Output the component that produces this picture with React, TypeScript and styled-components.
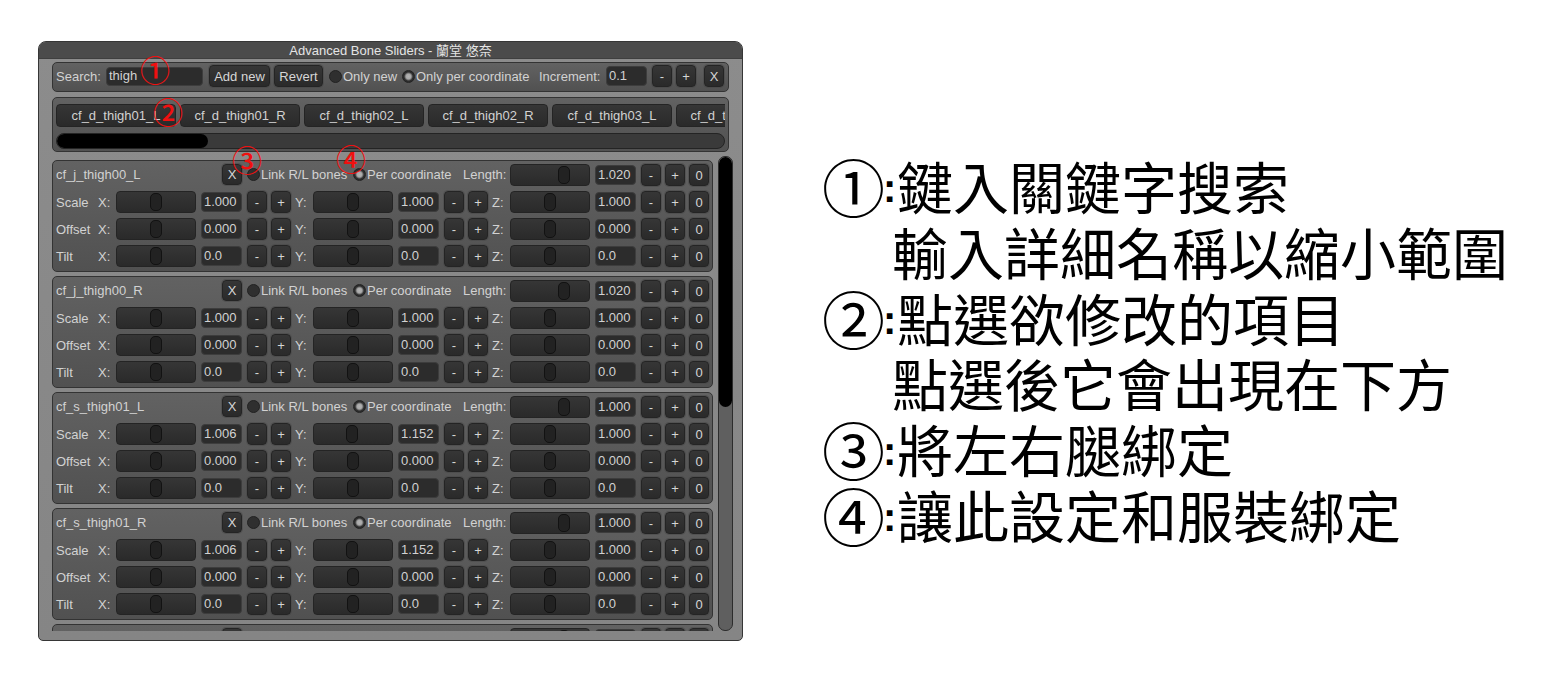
import React from "react";
import styled, { createGlobalStyle } from "styled-components";

const Global = createGlobalStyle`
  html, body { margin: 0; padding: 0; background: #fff; }
  #root { width: 1558px; height: 681px; overflow: hidden; }
`;

const UI_FONT = `"Liberation Sans", "Noto Sans CJK TC", sans-serif`;

const Page = styled.div`
  display: flex;
  align-items: flex-start;
  padding: 41px 0 0 38px;
  font-family: ${UI_FONT};
  font-size: 13px;
  color: #d2d2d2;
`;

const Window = styled.div`
  position: relative;
  box-sizing: border-box;
  width: 705px;
  height: 600px;
  flex: none;
  background: linear-gradient(#8c8c8c, #858585);
  border: 1px solid #363636;
  border-radius: 8px 8px 5px 5px;
  overflow: hidden;
`;

const TitleBar = styled.div`
  height: 16px;
  line-height: 17px;
  background: #4b4b4b;
  border-bottom: 1px solid #3f3f3f;
  text-align: center;
  color: #e4e4e4;
`;

const Content = styled.div`
  display: flex;
  flex-direction: column;
  gap: 5px;
  padding: 3px 8px 0 13px;
`;

const Card = styled.div`
  box-sizing: border-box;
  border: 1px solid #333;
  border-radius: 5px;
  background: linear-gradient(#626262, #515151);
`;

const Toolbar = styled(Card)`
  width: 677px;
  height: 30px;
  display: flex;
  align-items: center;
  padding: 0 0 2px 3px;
  white-space: nowrap;
`;

const Dark = styled.div`
  box-sizing: border-box;
  background: linear-gradient(#363636, #2a2a2a);
  border: 1px solid #242424;
  border-radius: 4px;
`;

const TextValue = styled(Dark)<{ $w: number; $ml?: number; $h?: number }>`
  width: ${(p) => p.$w}px;
  height: ${(p) => p.$h ?? 20}px;
  margin-left: ${(p) => p.$ml ?? 5}px;
  flex: none;
  padding-left: 2px;
  line-height: ${(p) => (p.$h ?? 20) - 3}px;
  background: #2c2c2c;
  border-color: #3d3d3d;
  color: #d2d2d2;
`;

const Btn = styled(Dark)<{ $w?: number; $ml?: number; $h?: number }>`
  width: ${(p) => p.$w ?? 20}px;
  height: ${(p) => p.$h ?? 22}px;
  margin-left: ${(p) => p.$ml ?? 4}px;
  flex: none;
  display: flex;
  align-items: center;
  justify-content: center;
  color: #d6d6d6;
  box-shadow: 0 0 0 1px rgba(70, 70, 70, 0.5);
`;

const Caption = styled.span<{ $w?: number }>`
  flex: none;
  display: inline-block;
  width: ${(p) => (p.$w ? `${p.$w}px` : "auto")};
`;

const RadioDot = styled.span<{ $on?: boolean }>`
  flex: none;
  box-sizing: border-box;
  width: 13px;
  height: 13px;
  margin-right: 1px;
  border-radius: 50%;
  border: 1px solid #222;
  background: ${(p) =>
    p.$on
      ? "radial-gradient(circle, #b4b4b4 0, #a8a8a8 2.5px, #2d2d2d 4.5px)"
      : "#2f2f2f"};
`;

const RadioOption = styled.div<{ $w?: number; $ml?: number }>`
  flex: none;
  display: flex;
  align-items: center;
  width: ${(p) => (p.$w ? `${p.$w}px` : "auto")};
  margin-left: ${(p) => p.$ml ?? 0}px;
`;

const TabPanel = styled(Card)`
  width: 677px;
  height: 55px;
  padding: 6px 3px 0;
`;

const TabStrip = styled.div`
  display: flex;
  gap: 4px;
  width: 669px;
  overflow: hidden;
`;

const Tab = styled(Dark)`
  flex: none;
  width: 120px;
  height: 23px;
  line-height: 21px;
  text-align: center;
`;

const HTrack = styled.div`
  box-sizing: border-box;
  width: 669px;
  height: 16px;
  margin-top: 6px;
  border: 1px solid #242424;
  border-radius: 8px;
  background: #3a3a3a;
  overflow: hidden;
`;

const HThumb = styled.div`
  width: 151px;
  height: 100%;
  border-radius: 7px;
  background: #000;
`;

const ScrollArea = styled.div`
  display: flex;
  gap: 5px;
  height: 475px;
  margin-top: -1px;
`;

const Stack = styled.div`
  width: 661px;
  display: flex;
  flex-direction: column;
  gap: 4px;
  padding-top: 4px;
  overflow: hidden;
`;

const BonePanel = styled(Card)`
  flex: none;
  height: 112px;
  padding: 3px;
  display: flex;
  flex-direction: column;
  gap: 5px;
`;

const Row = styled.div`
  height: 22px;
  display: flex;
  align-items: center;
  white-space: nowrap;
`;

const HeaderRow = styled(Row)`
  & > ${Caption}, & > ${RadioOption} {
    padding-bottom: 2px;
  }
  & > ${Btn}:first-of-type {
    height: 21px;
    align-self: flex-start;
  }
`;

const SliderTrack = styled(Dark)`
  flex: none;
  display: flex;
  align-items: center;
  width: 80px;
  height: 22px;
`;

const SliderThumb = styled.div<{ $at: number }>`
  width: 12px;
  height: 18px;
  margin-left: ${(p) => p.$at}px;
  border-radius: 5px;
  background: #222;
  border: 1px solid #121212;
  box-sizing: border-box;
`;

const VTrack = styled.div`
  flex: none;
  box-sizing: border-box;
  width: 15px;
  height: 475px;
  border: 1px solid #2c2c2c;
  border-radius: 7px;
  background: #5f5f5f;
  overflow: hidden;
`;

const VThumb = styled.div`
  height: 250px;
  border-radius: 7px;
  background: #000;
`;

const Mark = styled.span<{ $x: number; $y: number }>`
  position: absolute;
  left: ${(p) => p.$x}px;
  top: ${(p) => p.$y}px;
  color: #f01010;
  font-family: "Noto Sans CJK TC", sans-serif;
  font-size: 30px;
  font-weight: 500;
  line-height: 30px;
`;

const Notes = styled.div`
  margin: 111px 0 0 79px;
  display: flex;
  flex-direction: column;
  font-family: "Noto Sans CJK TC", sans-serif;
  font-size: 56px;
  color: #000;
  white-space: nowrap;
`;

const NoteLine = styled.div<{ $indent?: boolean }>`
  display: flex;
  align-items: center;
  height: 65.8px;
  line-height: 65.8px;
  padding-left: ${(p) => (p.$indent ? 70 : 0)}px;
`;

const NoteTag = styled.span`
  flex: none;
  display: flex;
  align-items: center;
  width: 75px;
  height: 65.8px;
`;

const NoteCircle = styled.span`
  font-size: 63px;
`;

const Colon = styled.span`
  font-family: "Liberation Sans", sans-serif;
  font-weight: 700;
  font-size: 40px;
  margin-left: -2px;
  padding-top: 8px;
`;

type Axis = { value: string; at: number };
type Bone = { name: string; length: string; lengthAt: number; scale: [Axis, Axis, Axis] };

const dflt = (v: string): Axis => ({ value: v, at: 33 });
const triple = (v: string): [Axis, Axis, Axis] => [dflt(v), dflt(v), dflt(v)];

const bones: Bone[] = [
  { name: "cf_j_thigh00_L", length: "1.020", lengthAt: 47, scale: triple("1.000") },
  { name: "cf_j_thigh00_R", length: "1.020", lengthAt: 47, scale: triple("1.000") },
  {
    name: "cf_s_thigh01_L",
    length: "1.000",
    lengthAt: 47,
    scale: [{ value: "1.006", at: 33 }, { value: "1.152", at: 32 }, dflt("1.000")],
  },
  {
    name: "cf_s_thigh01_R",
    length: "1.000",
    lengthAt: 47,
    scale: [{ value: "1.006", at: 33 }, { value: "1.152", at: 32 }, dflt("1.000")],
  },
];

const Slider = ({ at }: { at: number }) => (
  <SliderTrack>
    <SliderThumb $at={at} />
  </SliderTrack>
);

const Spacer = styled.span`
  flex: none;
  width: 4px;
`;

const AxisGroup = ({ label, axis }: { label: string; axis: Axis }) => (
  <>
    <Caption $w={18}>{label}</Caption>
    <Slider at={axis.at} />
    <TextValue $w={41}>{axis.value}</TextValue>
    <Btn $ml={5}>-</Btn>
    <Btn>+</Btn>
  </>
);

const ValueRow = ({ label, axes }: { label: string; axes: [Axis, Axis, Axis] }) => (
  <Row>
    <Caption $w={42}>{label}</Caption>
    <AxisGroup label="X:" axis={axes[0]} />
    <Spacer />
    <AxisGroup label="Y:" axis={axes[1]} />
    <Spacer />
    <AxisGroup label="Z:" axis={axes[2]} />
    <Btn>0</Btn>
  </Row>
);

const BoneHeader = ({ name, length, at }: { name: string; length: string; at: number }) => (
  <HeaderRow>
    <Caption $w={166}>{name}</Caption>
    <Btn $ml={0}>X</Btn>
    <RadioOption $w={106} $ml={5}>
      <RadioDot />
      Link R/L bones
    </RadioOption>
    <RadioOption $w={110}>
      <RadioDot $on />
      Per coordinate
    </RadioOption>
    <Caption $w={47}>Length:</Caption>
    <Slider at={at} />
    <TextValue $w={41}>{length}</TextValue>
    <Btn $ml={5}>-</Btn>
    <Btn>+</Btn>
    <Btn>0</Btn>
  </HeaderRow>
);

const BoneCard = ({ bone }: { bone: Bone }) => (
  <BonePanel>
    <BoneHeader name={bone.name} length={bone.length} at={bone.lengthAt} />
    <ValueRow label="Scale" axes={bone.scale} />
    <ValueRow label="Offset" axes={triple("0.000")} />
    <ValueRow label="Tilt" axes={triple("0.0")} />
  </BonePanel>
);

const tabs = [
  "cf_d_thigh01_L",
  "cf_d_thigh01_R",
  "cf_d_thigh02_L",
  "cf_d_thigh02_R",
  "cf_d_thigh03_L",
  "cf_d_thigh03_R",
];

const notes: { tag?: string; text: string }[] = [
  { tag: "①", text: "鍵入關鍵字搜索" },
  { text: "輸入詳細名稱以縮小範圍" },
  { tag: "②", text: "點選欲修改的項目" },
  { text: "點選後它會出現在下方" },
  { tag: "③", text: "將左右腿綁定" },
  { tag: "④", text: "讓此設定和服裝綁定" },
];

export default function App() {
  return (
    <Page>
      <Global />
      <Window>
        <TitleBar>Advanced Bone Sliders - 蘭堂 悠奈</TitleBar>
        <Content>
          <Toolbar>
            <Caption $w={50}>Search:</Caption>
            <TextValue $w={97} $ml={0} $h={19}>thigh</TextValue>
            <Btn $w={61} $ml={6}>Add new</Btn>
            <Btn $w={49}>Revert</Btn>
            <RadioOption $w={73} $ml={6}>
              <RadioDot />
              Only new
            </RadioOption>
            <RadioOption $w={137}>
              <RadioDot $on />
              Only per coordinate
            </RadioOption>
            <Caption $w={67}>Increment:</Caption>
            <TextValue $w={41} $ml={0}>0.1</TextValue>
            <Btn $ml={5}>-</Btn>
            <Btn>+</Btn>
            <Btn $ml={8}>X</Btn>
          </Toolbar>
          <TabPanel>
            <TabStrip>
              {tabs.map((t) => (
                <Tab key={t}>{t}</Tab>
              ))}
            </TabStrip>
            <HTrack>
              <HThumb />
            </HTrack>
          </TabPanel>
          <ScrollArea>
            <Stack>
              {bones.map((b) => (
                <BoneCard key={b.name} bone={b} />
              ))}
              <BonePanel>
                <BoneHeader name="cf_s_thigh02_L" length="1.000" at={47} />
              </BonePanel>
            </Stack>
            <VTrack>
              <VThumb />
            </VTrack>
          </ScrollArea>
        </Content>
        <Mark $x={101} $y={12}>①</Mark>
        <Mark $x={114} $y={54}>②</Mark>
        <Mark $x={193} $y={102}>③</Mark>
        <Mark $x={297} $y={101}>④</Mark>
      </Window>
      <Notes>
        {notes.map((n) => (
          <NoteLine key={n.text} $indent={!n.tag}>
            {n.tag && (
              <NoteTag>
                <NoteCircle>{n.tag}</NoteCircle>
                <Colon>:</Colon>
              </NoteTag>
            )}
            {n.text}
          </NoteLine>
        ))}
      </Notes>
    </Page>
  );
}
